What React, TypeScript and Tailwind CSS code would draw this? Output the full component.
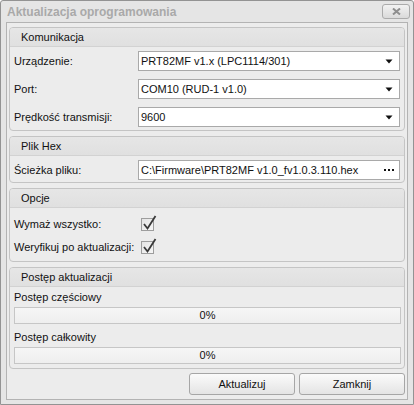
import React from "react";

function Arrow() {
  return (
    <svg width="8" height="5" viewBox="0 0 8 5" className="shrink-0">
      <path d="M0.5 0.5 H7.5 L4 4.5 Z" fill="#111" />
    </svg>
  );
}

function Group({ title, children }: { title: string; children: React.ReactNode }) {
  return (
    <div className="border border-[#c4c4c4] rounded-[4px] bg-[#ececec] overflow-hidden">
      <div className="h-[19px] flex items-center pl-[11px] bg-gradient-to-b from-[#e6e6e6] to-[#e0e0e0] border-b border-[#d2d2d2]">
        {title}
      </div>
      {children}
    </div>
  );
}

function Combo({ value }: { value: string }) {
  return (
    <div className="w-[262px] h-[20px] bg-white border border-[#a9a9a9] flex items-center justify-between pl-[2px] pr-[6px]">
      <span className="leading-none">{value}</span>
      <Arrow />
    </div>
  );
}

function Row({ label, children }: { label: string; children: React.ReactNode }) {
  return (
    <div className="h-[20px] flex items-center">
      <div className="w-[124px]">{label}</div>
      {children}
    </div>
  );
}

function Check() {
  return (
    <div className="relative w-[13px] h-[13px] ml-[3px] border border-[#9d9d9d] bg-gradient-to-br from-[#e4e4e4] to-[#f6f6f6]">
      <svg width="16" height="17" viewBox="0 0 16 17" className="absolute left-[0px] top-[-5px]">
        <path d="M2 10 L5.5 14.5 L13.5 2" fill="none" stroke="#3a3a3a" strokeWidth="1.8" />
      </svg>
    </div>
  );
}

function Progress() {
  return (
    <div className="h-[17px] border border-[#c6c6c6] bg-gradient-to-b from-[#f6f6f6] to-[#eeeeee] flex items-center justify-center">
      0%
    </div>
  );
}

function Button({ label }: { label: string }) {
  return (
    <div className="w-[106px] h-[22px] border border-[#a6a6a6] rounded-[3px] bg-gradient-to-b from-[#fbfbfb] to-[#e4e4e4] flex items-center justify-center">
      {label}
    </div>
  );
}

export default function App() {
  return (
    <div className="w-[414px] h-[405px] bg-[#e5e5e5] border border-[#939393] rounded-t-[3px] flex flex-col font-['Liberation_Sans',Arial,sans-serif] text-[11px] text-[#111]">
      {/* Title bar */}
      <div className="h-[21px] flex items-center justify-between pl-[6px] pr-[3px]">
        <span className="font-bold text-[12px] text-[#a9a9a9]">Aktualizacja oprogramowania</span>
        <div className="w-[28px] h-[15px] border border-[#ababab] rounded-[3px] bg-gradient-to-b from-[#f2f2f2] to-[#dadada] flex items-center justify-center">
          <svg width="9" height="7" viewBox="0 0 9 7">
            <path d="M1 0.5 L8 6.5 M8 0.5 L1 6.5" stroke="#8e8e8e" strokeWidth="2" />
          </svg>
        </div>
      </div>

      {/* Client area */}
      <div className="flex-1 mx-[5px] mb-[4px] border border-[#b3b3b3] bg-[#ececec] px-[2px] pt-[4px] flex flex-col gap-[5px]">
        <Group title="Komunikacja">
          <div className="pl-[4px] pr-[3px] pt-[4px] pb-[3px] flex flex-col gap-[8px]">
            <Row label="Urządzenie:">
              <Combo value="PRT82MF v1.x (LPC1114/301)" />
            </Row>
            <Row label="Port:">
              <Combo value="COM10 (RUD-1 v1.0)" />
            </Row>
            <Row label="Prędkość transmisji:">
              <Combo value="9600" />
            </Row>
          </div>
        </Group>

        <Group title="Plik Hex">
          <div className="pl-[4px] pr-[3px] pt-[4px] pb-[2px]">
            <Row label="Ścieżka pliku:">
              <div className="w-[262px] h-[20px] bg-white border border-[#a9a9a9] flex items-center justify-between pl-[2px] pr-[5px]">
                <span>{"C:\\Firmware\\PRT82MF v1.0_fv1.0.3.110.hex"}</span>
                <div className="flex gap-[2px]">
                  <div className="w-[2px] h-[2px] bg-[#111]" />
                  <div className="w-[2px] h-[2px] bg-[#111]" />
                  <div className="w-[2px] h-[2px] bg-[#111]" />
                </div>
              </div>
            </Row>
          </div>
        </Group>

        <Group title="Opcje">
          <div className="pl-[4px] pr-[3px] pt-[6px] pb-[4px] flex flex-col gap-[3px]">
            <Row label="Wymaż wszystko:">
              <Check />
            </Row>
            <Row label="Weryfikuj po aktualizacji:">
              <Check />
            </Row>
          </div>
        </Group>

        <Group title="Postęp aktualizacji">
          <div className="pl-[4px] pr-[3px] pt-[3px] pb-[4px] flex flex-col">
            <div className="h-[14px] flex items-center">Postęp częściowy</div>
            <div className="mt-[3px]">
              <Progress />
            </div>
            <div className="h-[14px] mt-[6px] flex items-center">Postęp całkowity</div>
            <div className="mt-[3px]">
              <Progress />
            </div>
          </div>
        </Group>

        <div className="flex justify-end gap-[4px] -mt-[1px]">
          <Button label="Aktualizuj" />
          <Button label="Zamknij" />
        </div>
      </div>
    </div>
  );
}
